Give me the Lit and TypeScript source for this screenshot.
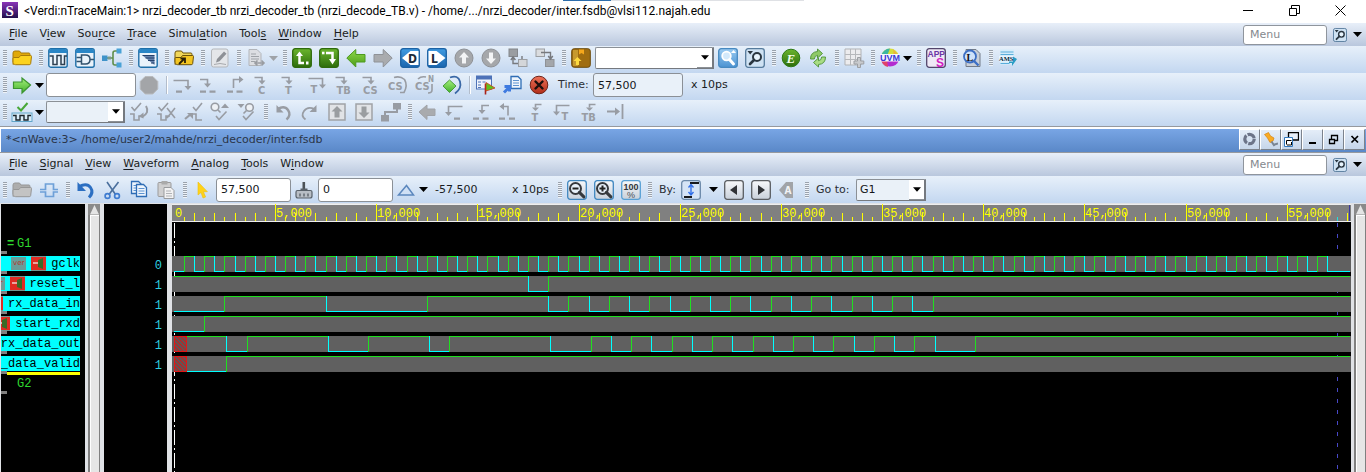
import { LitElement, html, svg, css, nothing } from "lit";
import { customElement } from "lit/decorators.js";

/* ---------- icons, all drawn on a 20 x 20 grid ---------- */
const G = "#989ca3";
const folder = (a: string, b: string, line: string) => svg`
  <path d="M1 5q0-2 2-2h4.500l1.500 2h8q1 0 1 1.500v8h-17z" fill=${b} stroke=${line}/>
  <path d="M1 16.500v-6q0-1 1-1h5l1.500-2h10q1 0 1 1l-.8 7q-.2 1.200-1.500 1.200h-13.500q-1.700 0-1.700-1z" fill=${a} stroke=${line}/>`;
const windowBox = (inner: unknown) => svg`
  <rect x=".8" y=".8" width="18.400" height="18.400" rx="2" fill="#eaf3fb" stroke="#1f6fa8" stroke-width="1.400"/>
  <path d="M1 5v-2q0-2 2-2h14q2 0 2 2v2z" fill="#2a86c6"/>${inner}`;
const letter = (t: string, x: number, y = 17.5, size = 11, fill = G) =>
  svg`<text x=${x} y=${y} font-size=${size} fill=${fill} class="glyph">${t}</text>`;
const gl = (d: string, w = 1.6) => svg`<path d=${d} fill="none" stroke=${G} stroke-width=${w}/>`;
const gf = (d: string) => svg`<path d=${d} fill=${G}/>`;
const page = (x: number, y: number) => svg`
  <path d="M${x} ${y}h7l3 3v9h-10z" fill="#eef5fd" stroke="#2f6db5" stroke-width="1.300"/>
  <path d="M${x + 2} ${y + 4}h6M${x + 2} ${y + 6.5}h6M${x + 2} ${y + 9}h6" stroke="#5d93d0"/>`;
const lens = (sx: number, sy: number, r: number, dir: number, col: string) => svg`
  <circle cx=${sx} cy=${sy} r=${r} fill="#e8f1fa" stroke=${col} stroke-width="2"/>
  <path d="M${sx + dir * r * 0.7} ${sy + r * 0.7}l${dir * 4.5} 4.500" stroke=${col} stroke-width="3" stroke-linecap="round"/>`;
const bevel = (fill: string, line: string) =>
  svg`<rect x=".7" y=".7" width="18.600" height="18.600" rx="2.500" fill=${fill} stroke=${line} stroke-width="1.300"/>`;

const icons: Record<string, unknown> = {
  open: folder("#fbd21f", "#e0a90a", "#a87a08"),
  openGray: folder("#c3c3c3", "#adadad", "#979797"),
  wave: windowBox(svg`<path d="M1.500 8h3.500v8.500h4v-9h4v9h3.500v-8.500h2.500" fill="none" stroke="#2d3f50" stroke-width="1.500"/>`),
  gate: windowBox(svg`<path d="M6.500 7h4q4.500 0 4.500 4.500t-4.500 4.500h-4zM1.500 9.500h5M1.500 13.500h5M15 11.500h4" fill="none" stroke="#33536e" stroke-width="1.500"/>`),
  tree: svg`<path d="M5 10h6M17 3h-4q-2 0-2 2v10q0 2 2 2h4M11 10" fill="none" stroke="#5f8e4a" stroke-width="1.600"/>
    <rect x="0" y="7.500" width="5.500" height="5.500" fill="#3f93c9"/><rect x="6" y="8.500" width="3" height="3" fill="#7d9a8c"/>
    <rect x="14.500" y=".5" width="5" height="5" fill="#4aa2d6"/><rect x="14.500" y="14.500" width="5" height="5" fill="#4aa2d6"/>`,
  list: windowBox(svg`<path d="M4.500 7.500h12v9.500z" fill="#6683ad"/><path d="M4.500 7.500h12M7.500 10h9M10 12.500h6.500M13 15h3.500" stroke="#24406b"/>`),
  openInto: svg`${folder("#f3c522", "#f0d65a", "#6d5208")}<path d="M5 16l5-5M6.500 10.500h4.500v4.500" fill="none" stroke="#2c2108" stroke-width="1.800"/>`,
  edit: svg`<rect x="1.500" y="1" width="16.500" height="18" rx="2" fill="#e4e6e9" stroke="#b4b7bb"/>
    <path d="M6 14.500l1-3.500 7-7.500 2.500 2.300-7 7.500z" fill="#8e9196"/><path d="M4 16.500q6-2 12 0" stroke="#a7a9ad" fill="none"/>`,
  doc: svg`<path d="M3 1.500h8l4 4v12h-12z" fill="#dcdee2" stroke="#b2b5ba"/><path d="M5 6h5M5 8.500h8M5 11h8M5 13.500h4" stroke="#9fa3a8"/>
    <path d="M9 15h9m-2.500-2.500l2.500 2.500-2.500 2.500M11.500 12.500l-2.500 2.500 2.500 2.500" stroke="#9a9da2" fill="none" stroke-width="1.600"/>`,
  greenUp: svg`${bevel("url(#green)", "#2f6a0c")}<path d="M4 8l3.500-4.500 3.500 4.500z" fill="#fff"/><path d="M7.500 5v10h4.500" fill="none" stroke="#fff" stroke-width="2.500"/><rect x="14" y="13.500" width="2.500" height="3" fill="#fff"/>`,
  greenDown: svg`${bevel("url(#green)", "#2f6a0c")}<path d="M7 5h6.500v8" fill="none" stroke="#fff" stroke-width="2.500"/><path d="M10 11h7l-3.500 5.500z" fill="#fff"/><rect x="3" y="3.700" width="2.500" height="2.600" fill="#fff"/>`,
  back: svg`<path d="M.8 10l9-8.500v5h9.200v7.500h-9.200v5z" fill="url(#green2)" stroke="#4c9a1e"/>`,
  fwdGray: svg`<path d="M19.200 10l-9-8.500v5h-9.200v7.500h9.200v5z" fill="#a9abae" stroke="#8f9297"/>`,
  backGray: svg`<path d="M2 10l8-7v4h8v6.500h-8v4z" fill="#a9abae" stroke="#a0a3a8"/>`,
  go: svg`<path d="M18.500 10l-8.500-7v4h-8.500v6.500h8.500v4.500z" fill="url(#green3)" stroke="#3c9430" stroke-width="1.200"/>`,
  driver: svg`${bevel("url(#blue)", "#1c62a4")}<path d="M18.500 3h-8l-8.500 7 8.500 7h8z" fill="#fff"/>${letter("D", 8, 14.5, 12, "#1d2b3a")}`,
  load: svg`${bevel("url(#blue)", "#1c62a4")}<path d="M1.500 3h8l9 7-9 7h-8z" fill="#fff"/>${letter("L", 4, 14.5, 12, "#1d2b3a")}`,
  upGray: svg`<circle cx="10" cy="10" r="9" fill="#a5a7aa" stroke="#8e9196"/><path d="M10 4l5 5.500h-3v6h-4v-6h-3z" fill="#f3f4f5"/>`,
  downGray: svg`<circle cx="10" cy="10" r="9" fill="#a5a7aa" stroke="#8e9196"/><path d="M10 16l5-5.500h-3v-6h-4v6h-3z" fill="#f3f4f5"/>`,
  blocksUp: svg`<rect x="1" y="1" width="8.500" height="7.500" fill="#9a9da1" stroke="#84878c"/><rect x="10.500" y="11.500" width="8.500" height="7" fill="#d4d6d9" stroke="#9b9ea2"/><path d="M5 9v6.500h5M2.800 12l2.300-3 2.300 3M14 11v-3" fill="none" stroke="#77797d" stroke-width="1.400"/>`,
  blocksDown: svg`<rect x="1" y="1" width="8.500" height="7.500" fill="#dadcdf" stroke="#9b9ea2"/><rect x="10.500" y="11.500" width="8.500" height="7" fill="#a3a6aa" stroke="#8e9196"/><path d="M6 4.500h9.500v6M13.200 8l2.300 3 2.300-3" fill="none" stroke="#77797d" stroke-width="1.400"/>`,
  book: svg`<rect x=".7" y=".7" width="18.600" height="18.600" rx="2.500" fill="#a06d10" stroke="#6b4a0c"/><rect x="2" y="2" width="5" height="16" fill="#c6992f"/><path d="M8 1.500h5v5l-2.500-1.500-2.500 1.500z" fill="#f6a81c"/><path d="M6.500 9l4 4h-2.500v4h-3v-4h-2.500z" fill="#ffdb3f"/>`,
  find: svg`${bevel("url(#sky)", "#4789c0")}<circle cx="8.500" cy="8" r="4.300" fill="#d3e9fb" stroke="#fff" stroke-width="1.800"/><path d="M11.500 11.500l4 4.500" stroke="#fff" stroke-width="3" stroke-linecap="round"/><path d="M13 5l2.500-3 2.500 3z" fill="#fff"/>`,
  findDark: svg`${bevel("#cfe2f3", "#567b9c")}<circle cx="12" cy="9" r="4" fill="#e8f4fd" stroke="#2a3640" stroke-width="2"/><path d="M9 12l-4 4" stroke="#2a3640" stroke-width="2.600" stroke-linecap="round"/><path d="M2.500 3h5.500l-2.800 3.500z" fill="#2a3640"/>`,
  edge: svg`<circle cx="10" cy="10" r="8.800" fill="url(#green)" stroke="#2c7a14"/><text x="5.500" y="15" font-size="13" class="serif" fill="#f4ffe9">E</text>`,
  reload: svg`<path d="M2.500 11q0-7 7-7.500v-2.500l5 4.500-5 4.500v-2.700q-3 .3-3.200 3.700z" fill="#8fc968" stroke="#4c9233" stroke-width=".9"/><path d="M17.500 9q0 7-7 7.500v2.500l-5-4.500 5-4.500v2.700q3-.3 3.200-3.700z" fill="#a9dc84" stroke="#4c9233" stroke-width=".9"/>`,
  gridAdd: svg`<path d="M1 1h16v16h-16z" fill="#ececee" stroke="#b0b2b5"/><path d="M6.500 1v16M11.500 1v16M1 6.500h16M1 11.500h16" stroke="#b6b8bb"/><path d="M13.500 9.500h3v3.500h3.300v3h-3.300v3.500h-3v-3.500h-3.500v-3h3.500z" fill="#c8cacd" stroke="#9c9fa3"/>`,
  uvm: svg`<path d="M10 .5a9.500 9.500 0 0 1 9 7.500h-18a9.500 9.500 0 0 1 9-7.500z" fill="#d6de3a"/><path d="M10 .5a9.500 9.500 0 0 0-9 7.500h6z" fill="#3db6a0"/><path d="M13 1l6 7h-5z" fill="#e9b33b"/><path d="M1 12h18a9.500 9.500 0 0 1-18 0z" fill="#b32bd0"/><path d="M1 12h6l1 7q-5-1-7-7z" fill="#e0426a"/><rect x="0" y="6" width="20" height="7.500" fill="#f4f6fb"/><text x="0" y="13" font-size="9" class="narrow" fill="#3a36d8">UVM</text>`,
  apps: svg`${bevel("#efe9f6", "#53456b")}<text x="1.500" y="8.500" font-size="8.500" class="narrow" fill="#6b35a5">APP</text><text x="10" y="18.500" font-size="12" class="narrow" fill="#d020c0">S</text>`,
  logView: svg`<path d="M4 1.500h10l4 4v13h-14z" fill="#c9cfd8" stroke="#737b87"/><circle cx="8" cy="8.500" r="6" fill="#cfe2fa" stroke="#3d6fc4" stroke-width="1.800"/><path d="M12 13l4.500 4.500" stroke="#3d6fc4" stroke-width="2.400"/><text x="4.500" y="12.500" font-size="10" class="serifb" fill="#111">L</text>`,
  ams: svg`<path d="M2 1.500h14v15h-14z" fill="#d4ecfa"/><path d="M2.500 4h13M2.500 6.500h13M2.500 15.500h9" stroke="#5aaedb"/><path d="M14 8l5 3-5 7v-3h-3v-4h3z" fill="#2a9cc4"/><rect x="1" y="8" width="14" height="5.500" fill="#e7f6ff"/><text x="1" y="13" font-size="6.500" class="serifb" fill="#082a3c">AMS</text>`,
  stop: svg`<path d="M6.200 1.500h7.600l5 5v7.500l-5 5h-7.600l-5-5v-7.500z" fill="#a3a5a8" stroke="#b9bbbe"/>`,
  stepOver: svg`${gl("M1.500 5.500h14.500v8")}${gf("M12.500 11h7l-3.500 4zM4 15.500h6v2.200h-6z")}`,
  stepInto: svg`${gl("M1 4.500h7.500v6")}${gf("M5 8.500h7l-3.500 4zM1 15.500h6v2.200h-6zM10.500 15.500h6v2.200h-6z")}`,
  stepOut: svg`${gl("M7.500 13v-8.500h7")}${gf("M13 1l4.500 3.500-4.500 3.500zM1 15.500h6v2.200h-6zM10.500 15.500h6v2.200h-6z")}`,
  stepC: svg`${gl("M1.500 2.500h7.500v4")}${gf("M5.500 5.500h7l-3.500 4z")}${letter("C", 5, 19)}`,
  stepT: svg`${gl("M1.500 2.500h7.500v4")}${gf("M5.500 5.500h7l-3.500 4z")}${letter("T", 5, 19)}`,
  stepT2: svg`${gl("M1.500 3.500h14v8")}${gf("M12 9.500h7l-3.500 4z")}${letter("T", 3.5, 18)}`,
  stepTB: svg`${gl("M1.500 2.500h8.500v4")}${gf("M6.500 5.500h7l-3.500 4z")}${letter("TB", 2.5, 19)}`,
  cs1: svg`${gl("M1.500 2.500h8.500v4")}${gf("M6.500 5.500h7l-3.500 4z")}${letter("CS", 2, 19)}`,
  cs2: svg`${gl("M6 2.500q6-2 10.500 2 3.500 6-.5 13h-4")}${letter("CS", 0, 15)}`,
  cs3: svg`${gl("M3 4q3-3 8-2M17 9v6q0 3-4 3")}${letter("CS", 0, 15)}${letter("N", 13, 7, 8)}`,
  greenStep: svg`<path d="M8 2.500q8-3 10 4t-5 12" fill="none" stroke="#3a68a6" stroke-width="1.800"/><path d="M7.500 5l6.500 6-6.500 6.500-6.500-6.500z" fill="url(#green3)" stroke="#4a9c3a"/>`,
  flag: svg`<rect x="1.500" y="1" width="15" height="13" fill="#eef3fb" stroke="#4d72b8"/><path d="M1.500 1h15v3.500h-15z" fill="#4d72b8"/><path d="M3 7h3M7.500 7h3M3 10h3M3 12.500h3" stroke="#4d72b8"/><path d="M10.500 19.500v-11" stroke="#a7221c" stroke-width="1.600"/><path d="M11 7.500l9 5.500-9 3z" fill="#5ec21c" stroke="#d33a1d" stroke-width=".8"/>`,
  docLink: svg`${page(9, 1.5)}<path d="M2 17.500l5-5m-4.500-1h5v5" fill="none" stroke="#3f7be0" stroke-width="3"/>`,
  cancel: svg`<circle cx="10" cy="10" r="8.800" fill="url(#red)" stroke="#6d2319"/><path d="M6.500 6.500l7 7M13.500 6.500l-7 7" stroke="#1d0f0c" stroke-width="2.400" stroke-linecap="round"/>`,
  waveCheck: svg`<rect x="0" y="11" width="20" height="8.500" fill="#d9ecf8" stroke="#62a5c9"/><path d="M1 13.500h3v4.500h4v-4.500h4v4.500h4v-4.500h3" fill="none" stroke="#1b252c" stroke-width="1.400"/><path d="M5.500 5l3.500 3.500 6.500-7.500" fill="none" stroke="#48a838" stroke-width="2"/>`,
  chk1: svg`${gl("M1 12h4v6h5v-4h4M2.500 5l3 3.500 6.500-7.500")}${gl("M17 4q4 7-4 11", 2)}${gf("M9.500 14.500l5-4v6z")}`,
  chk2: svg`${gl("M1 12h4v6h5v-4h4M2.500 5l3 3.500 6.500-7.500M11 6l8 10M19 6l-8 10")}`,
  chk3: svg`${gl("M9 12h4v6h6M10 5l3 3.500 6-7.500")}${gl("M2 17l6-5", 2.2)}${gf("M4 11h6v6z")}`,
  chk4: svg`<circle cx="5" cy="5" r="3.800" fill="#eef1f5" stroke=${G} stroke-width="1.600"/>${gl("M8 8l2.500 2.500M6 14l3 3.500 7.500-8")}${gf("M11 6l4-4.500 4 4.500z")}`,
  chk5: svg`<circle cx="12.500" cy="5.500" r="3.800" fill="#eef1f5" stroke=${G} stroke-width="1.600"/>${gl("M9.500 8.500l-3 3M6 14l3 3.500 7.500-8")}${gf("M.5 2h7l-3.500 4z")}`,
  undoGray: svg`${gl("M4.500 7q7-4 10.500 1t-1.500 9.500", 2.4)}${gf("M3.500 3v7.500h7z")}`,
  redoGray: svg`${gl("M14.500 7q-7-3-10.500 2t1.500 8.500", 1.8)}${gf("M16.500 3v7h-7z")}`,
  boxUp: svg`<path d="M2 2h16v16h-16z" fill="#e1e3e6" stroke="#a0a3a7" stroke-width="1.500"/><path d="M10 4l5.500 5.500h-3v6h-5v-6h-3z" fill="#9a9da0"/>`,
  boxDown: svg`<path d="M2 2h16v16h-16z" fill="#e1e3e6" stroke="#a0a3a7" stroke-width="1.500"/><path d="M10 16l5.500-5.500h-3v-6h-5v6h-3z" fill="#9a9da0"/>`,
  link: svg`${gf("M12 1h8v6.500h-8zM0 13h8v6.500h-8z")}${gl("M16 7v3h-12v3", 2)}`,
  rOver: svg`${gl("M18.500 4.500h-14v7")}${gf("M1 10h7l-3.500 4zM10 15.500h6v2.200h-6z")}`,
  rInto: svg`${gl("M18 3.500h-7v6")}${gf("M7.500 8h7l-3.500 4zM2 15.500h6v2.200h-6zM11.500 15.500h6v2.200h-6z")}`,
  rOut: svg`${gl("M10 13.500v-9h-5")}${gf("M6 1l-4.500 3.500 4.500 3.500zM1 15.500h6v2.200h-6zM11 15.500h6v2.200h-6z")}`,
  rT: svg`${gl("M16.500 2.500h-6v3")}${gf("M7 5.500h7l-3.500 3.500z")}${letter("T", 6.5, 19)}`,
  rT2: svg`${gl("M17.500 3.500h-13v8")}${gf("M1 9.500h7l-3.500 4z")}${letter("T", 9.5, 18)}`,
  rTB: svg`${gl("M16.500 2.500h-6v3")}${gf("M7 5.500h7l-3.500 3.500z")}${letter("TB", 2.5, 19)}`,
  toBar: svg`${gl("M1 9.500h11M16.500 2v15", 1.8)}${gf("M9 5.500l5 4-5 4z")}`,
  pulse: svg`<path d="M1 9.500h5.500v-5.500h8v5.500h4.500M1 12h5.500v4.500h8v-4.500h4.500" fill="none" stroke="#6ea0d8" stroke-width="1.700"/>`,
  undo: svg`<path d="M4 6.500q8-4 11.500 1t-1.500 10" fill="none" stroke="#2c6fc2" stroke-width="3"/><path d="M2.500 2v9h8.500z" fill="#2c6fc2"/>`,
  cut: svg`<path d="M5 2l8.500 12.500M16.500 2l-9.500 12.500" stroke="#4a6f9d" stroke-width="1.600"/><circle cx="5.500" cy="16" r="2.400" fill="none" stroke="#3f7cd0" stroke-width="1.700"/><circle cx="15" cy="16" r="2.400" fill="none" stroke="#3f7cd0" stroke-width="1.700"/>`,
  copy: svg`${page(2.5, 1.5)}${page(7.5, 4.5)}`,
  paste: svg`<rect x="2" y="2.500" width="13" height="14" rx="1" fill="#cfcfd0" stroke="#9b9b9c"/><rect x="5.500" y="1" width="6" height="3.500" fill="#aaa"/><path d="M8 7.500h7l3 3v8h-10z" fill="#f2f2f3" stroke="#999b9e"/><path d="M10 11h5M10 13.500h6M10 16h6" stroke="#b0b2b5"/>`,
  pointer: svg`<path d="M6 2v13l3-2.500 2 5.500 2.600-1-2.200-5.300h4z" fill="#ffd21a" stroke="#efbf0c" stroke-width=".6"/>`,
  marker: svg`<path d="M9.800 2v8" stroke="#4b5157" stroke-width="2.600"/><path d="M6.500 9.500h7" stroke="#59616a" stroke-width="2"/><path d="M2 12q0-1.500 1.500-1.500h13q1.500 0 1.500 1.500v4q0 2-2 2h-12q-2 0-2-2z" fill="#b8bec5" stroke="#59616a" stroke-width="1.200"/><path d="M6 13.500v3M10 13.500v3M14 13.500v3" stroke="#565d65" stroke-width="1.300"/>`,
  delta: svg`<path d="M10.500 5.500l7 9.500h-15z" fill="#cfe0f5" stroke="#5b87bd" stroke-width="1.500"/>`,
  zoomOut: svg`${bevel("url(#pale)", "#3f87c0")}${lens(8.5, 8.5, 5.5, 1, "#36393d")}<path d="M5.500 8.500h6" stroke="#222" stroke-width="2"/>`,
  zoomIn: svg`${bevel("url(#pale)", "#3f87c0")}${lens(8.5, 8.5, 5.5, 1, "#36393d")}<path d="M5.500 8.500h6M8.500 5.500v6" stroke="#222" stroke-width="2"/>`,
  zoomFull: svg`${bevel("url(#pale)", "#58a0d4")}<text x="2.500" y="9.500" font-size="9" class="narrow" fill="#32373c">100</text><text x="6" y="17.500" font-size="9" class="plain" fill="#4a5056">%</text>`,
  byEdge: svg`${bevel("#d5e4f6", "#6a88a8")}<path d="M3 17h8M9 3h9" stroke="#17191c" stroke-width="2"/><path d="M10 5v10M7.500 7.500l2.500-3 2.500 3M7.500 12l2.500 3 2.500-3" fill="none" stroke="#3270e8" stroke-width="1.400"/>`,
  prev: svg`${bevel("url(#pale)", "#5a5d61")}<path d="M13 5v10l-7-5z" fill="#303236"/>`,
  next: svg`${bevel("url(#pale)", "#5a5d61")}<path d="M7 5v10l7-5z" fill="#303236"/>`,
  tagA: svg`<path d="M1 10l7-8h7v16h-7z" fill="#a1a4a8"/>${letter("A", 6.5, 14, 10, "#f1f3f5")}`,
};
const pic = (name: string) => html`<svg class="pic" viewBox="0 0 20 20" aria-hidden="true">${icons[name]}</svg>`;
const caret = html`<svg class="caret" viewBox="0 0 9 5" aria-hidden="true"><path d="M0 0h9l-4.500 5z"/></svg>`;

const tool = (name: string) => html`<button class="tool" aria-label=${name}>${pic(name)}</button>`;
const tools = (...names: string[]) => names.map(tool);
const tight = (name: string) => html`<button class="tool tight" aria-label=${name}>${pic(name)}</button>`;
const drop = (name: string, size = "", off = false) =>
  html`<button class="tool drop ${size} ${off ? "off" : ""}" aria-label=${name}>${pic(name)}${caret}</button>`;
const grip = html`<span class="grip"></span>`;
const rule = html`<span class="rule"></span>`;
const combo = (label: string, size: string, value = "") => html`
  <span class="combo ${size}">
    <select aria-label=${label}><option>${value}</option></select>
    <span class="comboArrow">${caret}</span>
  </span>`;

/* a menu entry: "_" stands before the letter used as its mnemonic */
const entry = (text: string) => {
  const i = text.indexOf("_");
  return html`<button class="entry">${text.slice(0, i)}<u>${text[i + 1]}</u>${text.slice(i + 2)}</button>`;
};
const menuBar = (items: string[]) => html`
  <nav class="menu">
    ${items.map(entry)}
    <span class="grow"></span>
    <input class="search" type="search" placeholder="Menu" aria-label="Menu search" />
    <button class="mini" aria-label="Find">${pic("findDark")}</button>
    <button class="mini arrow" aria-label="Find options">${caret}</button>
  </nav>`;

/* ---------- waveforms ---------- */
const SCALE = 0.020235;
const ORIGIN = 2.3;
const END = 58150;
const at = (t: number) => Math.floor(ORIGIN + t * SCALE) + 0.5;

interface Signal { name: string; value: string; start: number; unknown?: number; edges: number[]; }
const span = (from: number, to: number, step: number) =>
  Array.from({ length: Math.round((to - from) / step) + 1 }, (_, i) => from + i * step);
const signals: Signal[] = [
  { name: "gclk", value: "0", start: 0, edges: span(500, 57000, 500) },
  { name: "reset_l", value: "1", start: 1, edges: [17500, 18500] },
  { name: "rx_data_in", value: "1", start: 0, edges: [2500, 7500, 12500, ...span(18500, 37500, 1000)] },
  { name: "start_rxd", value: "1", start: 0, edges: [1500] },
  { name: "rx_data_out", value: "1", start: 1, unknown: 600,
    edges: [2600, 3600, 7600, 9600, 12600, 13600, 18600, ...span(20600, 37600, 1000), 39600] },
  { name: "rx_data_valid", value: "1", start: 0, unknown: 600, edges: [2600] },
];

const trace = (s: Signal, row: number) => {
  const top = 52;
  const y = top + row * 20;
  let level = s.start;
  let x = at(s.unknown ?? 0) - 0.5;
  const parts: unknown[] = [];
  for (const t of [...s.edges, END]) {
    const nx = at(t) - 0.5;
    parts.push(svg`<rect x=${x} y=${level ? y : y + 15} width=${nx - x} height="1" class=${level ? "hi" : "lo"}/>`);
    if (t !== END) {
      parts.push(svg`<rect x=${nx} y=${y} width="1" height="16" class=${level ? "lo" : "hi"}/>`);
      level = 1 - level;
    }
    x = nx;
  }
  return svg`
    <rect x="0" y=${y} width="100%" height="16" fill="#606060"/>
    ${parts}
    ${s.unknown
      ? svg`<rect x=${at(0)} y=${y + 0.5} width=${at(s.unknown) - at(0)} height="15" fill="url(#hatch)" stroke="#e01818"/>`
      : nothing}`;
};

@customElement("app-root")
export class AppRoot extends LitElement {
  static styles = css`
    :host { display: flex; flex-direction: column; min-height: 100vh; overflow: hidden; position: relative;
      background: #fff; color: #1a1d22; font: 11px/14px "DejaVu Sans", Verdana, sans-serif; }
    * { box-sizing: border-box; }
    button { border: 0; background: none; padding: 0; margin: 0; font: inherit; color: inherit; flex: none; }
    input, select { font: inherit; color: #15181c; margin: 0; outline: 0; }
    .defs { position: absolute; width: 0; height: 0; }
    .grow { flex: 1; }
    .glyph { font-family: "DejaVu Sans Condensed", "DejaVu Sans", sans-serif; font-weight: bold; }
    .serif { font-family: "Liberation Serif", serif; font-style: italic; font-weight: bold; }
    .serifb { font-family: "Liberation Serif", serif; font-weight: bold; }
    .narrow { font-family: "Liberation Sans Narrow", "Liberation Sans", sans-serif; font-weight: bold; }
    .plain { font-family: "Liberation Sans", sans-serif; }

    .title { display: flex; align-items: center; height: 23px; padding: 0 20px 3px 2px; gap: 6px;
      background: linear-gradient(#2b6cab, #2b6cab) 563px 0 / 48px 1px no-repeat,
        linear-gradient(#dfe1e5, #dfe1e5) 611px 0 / 193px 1px no-repeat, #fff; }
    .title h1 { margin: 0; padding-top: 2px; flex: 1; font: 12px/16px Roboto, "Noto Sans", sans-serif; color: #000; white-space: nowrap; }
    .logo { width: 16px; height: 16px; }
    .controls { display: flex; gap: 35px; }
    .controls svg { width: 11px; height: 11px; display: block; fill: none; stroke: #000; }

    .menu { display: flex; align-items: center; height: 23px; padding: 0 3px;
      background: linear-gradient(#e8eff9, #b9c7dd); }
    .entry { padding: 0 6px 1px; }
    .entry u { text-underline-offset: 2px; }
    .search { width: 84px; height: 20px; border: 1px solid #8f959d; border-radius: 3px; padding: 0 6px;
      background: #fff; appearance: none; }
    .search::placeholder { color: #85898e; opacity: 1; }
    .mini { margin-left: 6px; display: flex; }
    .mini .pic { width: 14px; height: 14px; }
    .arrow { width: 10px; }

    .bar { display: flex; align-items: center; height: 27px; padding: 0 3px 3px;
      background: linear-gradient(#e7f0fa, #c3d7f0); white-space: nowrap; }
    .third { height: 26px; padding-bottom: 2px; }
    .inner { padding-bottom: 0; }
    .pic { width: 20px; height: 20px; display: block; flex: none; overflow: visible; }
    .caret { width: 9px; height: 5px; display: block; fill: #000; flex: none; }
    .tool { width: 27px; height: 20px; display: flex; align-items: center; }
    .tight { width: 24px; }
    .drop { width: 34px; gap: 3px; }
    .wide { width: 37px; }
    .wider { width: 39px; }
    .widest { width: 43px; gap: 8px; }
    .off .caret { fill: #9fa3a8; }
    .grip { width: 4px; height: 16px; margin-right: 5px; flex: none;
      background: repeating-linear-gradient(#9aa2ad 0 1px, #eef3f9 1px 2px); }
    .rule { width: 2px; height: 18px; margin-right: 4px; flex: none; background: #b3bdcb; border-right: 1px solid #fff; }
    .field { width: 90px; height: 24px; border: 1px solid #8b9096; border-radius: 3px; padding: 0 4px; margin-right: 3px; background: #fff; flex: none; }
    .small { width: 75px; }
    .dim { background: #e9f1f9; }
    .combo { position: relative; display: flex; height: 22px; flex: none; margin-right: 4px; }
    .combo select { appearance: none; width: 100%; height: 22px; border: 1px solid #8b9096; border-right: 2px solid #75797f;
      border-bottom-color: #75797f; border-radius: 2px 0 0 2px; padding: 0 3px; background: #eaf1f8; }
    .comboArrow { position: absolute; right: 2px; top: 1px; bottom: 1px; width: 15px; display: flex; align-items: center;
      justify-content: center; background: #fff; border-bottom: 1px solid #8b9096; pointer-events: none; }
    .comboArrow .caret { width: 8px; }
    .w120 { width: 119px; }
    .w120 select { background: #fff; }
    .w80 { width: 79px; }
    .w70 { width: 70px; }
    .label { padding-left: 2px; color: #2b2f36; flex: none; }
    .time { width: 37px; }
    .by { width: 24px; }
    .goto { width: 42px; }
    .unit { padding-left: 5px; }
    .diff { width: 70px; }
    .diff + .unit { width: 53px; padding-left: 7px; }

    .sub { display: flex; align-items: center; height: 27px; padding: 0 1px 0 6px; border: solid; border-color: #96999e #fff;
      border-width: 1px 0; box-shadow: inset 0 2px #fff, inset 1px 0 #fff;
      background: linear-gradient(#7ba8e7, #5a88c8); color: #2a3548; }
    .sub h2 { margin: 0; font: inherit; flex: 1; }
    .sub button { width: 21px; height: 21px; background: linear-gradient(#e4edf8, #c6d6ea); border: 1px solid #fff;
      border-right-color: #7c838d; border-bottom-color: #7c838d; display: flex; align-items: center; justify-content: center; }
    .sub svg { width: 15px; height: 15px; }

    .work { display: flex; flex: 1; background: #e0e2e6; padding: 1px 0 0 1px; }
    .names { width: 84px; background: #000; padding-top: 27px; font: 12px/16px "Liberation Mono", monospace; overflow: hidden; }
    .names ul, .values ul { list-style: none; margin: 0; padding: 0; }
    .names li { height: 20px; padding: 5px 5px 0 0; background: linear-gradient(#808080, #808080) 0 0 / 6px 3px no-repeat; }
    .names .group { color: #2fd82f; padding: 5px 0 0 16px; }
    .names .first { background: none; padding-left: 6px; display: flex; }
    .names .eq { width: 10px; font-weight: bold; }
    .names .last { background: linear-gradient(#808080, #808080) 0 0 / 6px 3px no-repeat,
      linear-gradient(#ff0, #ff0) 6px 1px / 73px 3px no-repeat; }
    .band { height: 15px; background: #0ff; color: #000; display: flex; justify-content: flex-end; gap: 5px; overflow: hidden; }
    .ver { width: 15px; height: 13px; margin-top: 1px; background: #6a9c98; color: #b03a2c; font: 7px/12px "DejaVu Sans", sans-serif; flex: none; text-align: center; }
    .port { width: 15px; height: 15px; flex: none; }
    .scroll { width: 19px; padding: 0 4px 0 3px; display: flex; flex-direction: column; flex: none; }
    .scroll.right { width: 15px; padding-right: 0; }
    .up { height: 11px; background: #8a8a8a; display: flex; justify-content: center; }
    .up svg { width: 11px; height: 11px; }
    .thumb { flex: 1; background: #e6e6e6; border: 1px solid #808080; border-width: 0 1px 0 2px; box-shadow: inset 1px 1px #fff; }
    .values { width: 63px; background: #000; color: #2fd0e0; padding-top: 52px; font: 12px/20px "Liberation Mono", monospace; text-align: right; }
    .values li { height: 20px; padding-right: 5px; }
    .waves { flex: 1; margin-left: 5px; min-width: 0; display: flex; background: #000; }
    .waves svg { width: 100%; height: 100%; min-height: 268px; display: block; }
    .hi { fill: #1fe01f; }
    .lo { fill: #0ff; }
    .scale { font: 12px "Liberation Mono", monospace; fill: #ff0; }
  `;

  render() {
    return html`
      <svg class="defs" aria-hidden="true"><defs>
        ${this.grad("green", "#6bb52e", "#2d6d0c")}${this.grad("green2", "#8ed84a", "#4c9c18")}
        ${this.grad("green3", "#a4f07c", "#43b02c")}${this.grad("blue", "#3f9be2", "#1b66ae")}
        ${this.grad("sky", "#9acbf2", "#4c93d2")}${this.grad("pale", "#f7f8fa", "#c8d0da")}
        ${this.grad("red", "#ef7258", "#b02c18")}${this.grad("violet", "#8a35b8", "#22104c")}
      </defs></svg>

      <header class="title">
        <svg class="logo" viewBox="0 0 16 16" aria-hidden="true"><rect width="16" height="16" fill="url(#violet)"/>
          <text x="3.500" y="13.500" font-size="15" class="serifb" fill="#fff">S</text></svg>
        <h1>&lt;Verdi:nTraceMain:1&gt; nrzi_decoder_tb nrzi_decoder_tb (nrzi_decode_TB.v) - /home/.../nrzi_decoder/inter.fsdb@vlsi112.najah.edu</h1>
        <div class="controls">
          <button aria-label="Minimize"><svg viewBox="0 0 11 11"><path d="M0 5.500h10"/></svg></button>
          <button aria-label="Restore"><svg viewBox="0 0 11 11"><path d="M.5 3.500h7v7h-7zM2.500 3v-2.500h8v8h-2.500"/></svg></button>
          <button aria-label="Close"><svg viewBox="0 0 11 11"><path d="M.5.5l10 10M10.500.5l-10 10"/></svg></button>
        </div>
      </header>

      ${menuBar(["_File", "V_iew", "Sou_rce", "_Trace", "Simul_ation", "Tool_s", "_Window", "_Help"])}

      <div class="bar">
        ${grip}${tools("open")}${grip}${tools("wave", "gate", "tree")}${grip}${tools("list")}
        ${grip}${tools("openInto")}${grip}${tools("edit")}${grip}${drop("doc", "wide", true)}
        ${grip}${tools("greenUp", "greenDown", "back", "fwdGray", "driver", "load", "upGray", "downGray", "blocksUp", "blocksDown")}
        ${grip}${tight("book")}
        ${combo("Search text", "w120")}${tools("find", "findDark")}
        ${grip}${tools("edge", "reload")}${grip}${tools("gridAdd")}${grip}${drop("uvm", "wide")}
        ${grip}${tools("apps")}${grip}${tools("logView")}${grip}${tools("ams")}
      </div>

      <div class="bar">
        ${grip}${drop("go")}<input class="field" type="text" aria-label="Go to time" />
        ${tools("stop")}${rule}${tools("stepOver", "stepInto", "stepOut", "stepC", "stepT", "stepT2", "stepTB", "cs1", "cs2", "cs3", "greenStep")}
        ${rule}${tools("flag", "docLink", "cancel")}
        <label class="label time" for="time">Time:</label>
        <input id="time" class="field dim" type="text" value="57,500" readonly />
        <span class="unit">x 10ps</span>
      </div>

      <div class="bar third">
        ${grip}${drop("waveCheck")}${combo("Check", "w80")}
        ${tools("chk1", "chk2", "chk3", "chk4", "chk5")}
        ${grip}${tools("undoGray", "redoGray", "boxUp", "boxDown", "link")}
        ${grip}${tools("backGray", "rOver", "rInto", "rOut", "rT", "rT2", "rTB", "toBar")}
      </div>

      <div class="sub">
        <h2>*&lt;nWave:3&gt; /home/user2/mahde/nrzi_decoder/inter.fsdb</h2>
        <button aria-label="Sync"><svg viewBox="0 0 15 15"><circle cx="7.500" cy="7" r="4.700" fill="none" stroke="#6c7488" stroke-width="3.200" stroke-dasharray="8.500 1.300"/></svg></button>
        <button aria-label="Pin"><svg viewBox="0 0 15 15"><path d="M1.500 2.500l4-2 2 3.500 3.500 2-1 3-3 1.500-2.500-4.500z" fill="#f9ab22" stroke="#d58210" stroke-width=".7"/><path d="M8.500 9.500l3 4.500M10 13l5-1.500" stroke="#7a8594" stroke-width="2"/></svg></button>
        <button aria-label="Undock"><svg viewBox="0 0 15 15"><path d="M4.500 0.500h10v7.500h-10z" fill="#e6eef9" stroke="#000" stroke-width="1.300"/><path d="M.5 5.500h8v9h-8z" fill="#fff" stroke="#3178bd"/><path d="M2.500 12.500v-4h5M3 13h4.500v-3" fill="none" stroke="#000"/></svg></button>
        <button aria-label="Minimize"><svg viewBox="0 0 15 15"><path d="M4 11h7" stroke="#000" stroke-width="2"/></svg></button>
        <button aria-label="Restore"><svg viewBox="0 0 15 15"><path d="M5.500 7v-3.500h6v5h-3M3.500 7.500h5v4h-5zM5 3.500h7M3 7.500h6" fill="none" stroke="#000" stroke-width="1.300"/></svg></button>
        <button aria-label="Close"><svg viewBox="0 0 15 15"><path d="M4.500 4l6.500 6.500M11 4l-6.500 6.500" stroke="#000" stroke-width="1.700"/></svg></button>
      </div>

      ${menuBar(["_File", "_Signal", "_View", "_Waveform", "_Analog", "_Tools", "W_indow"])}

      <div class="bar inner">
        ${grip}${tools("openGray", "pulse")}${grip}${tools("undo", "cut", "copy", "paste")}
        ${grip}${tight("pointer")}
        <input class="field small" type="text" aria-label="Cursor time" value="57,500" />
        ${tight("marker")}
        <input class="field small" type="text" aria-label="Marker time" value="0" />
        ${drop("delta", "wider")}
        <output class="diff">-57,500</output>
        <span class="unit">x 10ps</span>
        ${grip}${tools("zoomOut", "zoomIn", "zoomFull")}
        ${grip}<span class="label by">By:</span>
        ${drop("byEdge", "widest")}${tools("prev", "next", "tagA")}
        ${grip}<label class="label goto" for="goto">Go to:</label>
        <span class="combo w70"><select id="goto"><option>G1</option></select><span class="comboArrow">${caret}</span></span>
      </div>

      <main class="work">
        <section class="names" aria-label="Signals">
          <ul>
            <li class="group first"><span class="eq">=</span><span>G1</span></li>
            ${signals.map((s) => html`<li><div class="band">
              <span class="ver">ver</span>
              <svg class="port" viewBox="0 0 15 15" aria-hidden="true"><rect y=".5" width="15" height="14" fill="#e02a22"/>
                <path d="M2 7h5" stroke="#f3d9d5" stroke-width="1.400"/><path d="M7 4l5-2v11l-5-2z" fill="#3b6a26"/></svg>
              <span>${s.name}</span></div></li>`)}
            <li class="group last">G2</li>
            <li></li>
          </ul>
        </section>
        ${this.scroller("scroll")}
        <section class="values" aria-label="Values"><ul>${signals.map((s) => html`<li>${s.value}</li>`)}</ul></section>
        <section class="waves" aria-label="Waveforms">${this.waves()}</section>
        ${this.scroller("scroll right")}
      </main>`;
  }

  private grad(id: string, a: string, b: string) {
    return svg`<linearGradient id=${id} x1="0" y1="0" x2="0" y2="1"><stop offset="0" stop-color=${a}/><stop offset="1" stop-color=${b}/></linearGradient>`;
  }

  private scroller(cls: string) {
    return html`<div class=${cls}>
      <div class="up"><svg viewBox="0 0 11 11" aria-hidden="true"><path d="M5.500 1l4.500 9.500h-9z" fill="#e4e4e4"/></svg></div>
      <div class="thumb"></div></div>`;
  }

  private waves() {
    return html`<svg role="img" aria-label="Signal traces">
      <defs><pattern id="hatch" width="4" height="4" patternUnits="userSpaceOnUse">
        <rect width="4" height="4" fill="#6a5050"/><path d="M0 0l4 4" stroke="#d01818"/></pattern></defs>
      <rect width="100%" height="17" fill="#808080"/>
      <path d="M0 .5H3000M0 17.500H3000" stroke="#eee"/>
      ${span(500, 58000, 500).map((t) => {
        const major = t % 5000 === 0;
        const y = major ? 0 : t % 1000 === 0 ? 9 : 13;
        return svg`<rect x=${at(t) - 0.5} y=${y} width="1" height=${17 - y} fill=${t === 57500 ? "#20e0e0" : "#ff0"}/>`;
      })}
      ${span(0, 55000, 5000).map((t) => svg`<text class="scale" x=${at(t) + 0.5} y="13">${t.toLocaleString("en-US")}</text>`)}
      <path d="M1177.500 1V17" stroke="#3a3a9a"/>
      <path d="M2.500 19V3000" stroke="#fff" stroke-dasharray="15 3 2 3"/>
      <path d="M${at(57500)} 19V3000" stroke="#4848c8" stroke-dasharray="4 7"/>
      ${signals.map(trace)}
    </svg>`;
  }
}
